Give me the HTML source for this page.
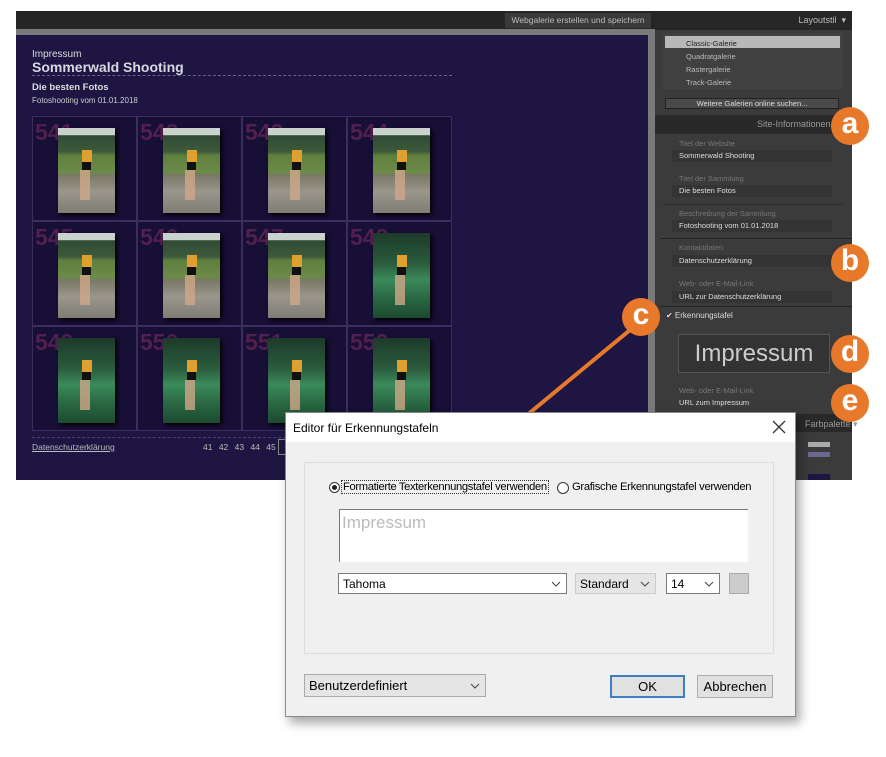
<!DOCTYPE html>
<html><head><meta charset="utf-8"><style>
*{margin:0;padding:0;box-sizing:border-box}
body{width:886px;height:757px;background:#fff;position:relative;overflow:hidden;font-family:"Liberation Sans",sans-serif}
.a{position:absolute;white-space:nowrap}
.cell{position:absolute;width:105px;height:105px;border:1px solid #3b2e5e;background:#170f36;overflow:hidden}
.num{position:absolute;left:2px;top:2px;font:bold 23px "Liberation Sans",sans-serif;color:#52204e}
.th{position:absolute;left:25px;top:11px;width:57px;height:85px;box-shadow:2px 2px 4px #000}
.m{background:linear-gradient(#c9d2cc 0,#c9d2cc 8%,#2f4a34 9%,#3d5a3c 28%,#5f7f3e 32%,#6c8a48 52%,#7a7868 56%,#9a968c 75%,#7f7c74 100%)}
.f{background:linear-gradient(#1c3a2a 0,#2a5a3c 35%,#3a8a5a 55%,#2b6a44 75%,#1c4a30 100%)}
.fig{position:absolute;left:24px;top:22px;width:10px;height:12px;background:#e0a030}
.fig2{position:absolute;left:24px;top:34px;width:9px;height:8px;background:#111}
.leg{position:absolute;left:22px;top:42px;width:10px;height:30px;background:#d0a888;opacity:.8}
.lab{position:absolute;color:#777;font-size:7.5px;line-height:9px}
.val{position:absolute;color:#ddd;font-size:7.5px;line-height:10px}
.fld{position:absolute;left:672px;width:160px;height:12px;background:#343434}
.circ{position:absolute;width:38px;height:38px;border-radius:50%;background:#e8792a;color:#fff;font:bold 30px "Liberation Sans",sans-serif;text-align:center;line-height:34px}
.dd{position:absolute;height:21px;border:1px solid #7a7a7a;background:#fff;font-size:12px;color:#000;padding:3px 4px}
.dd svg{position:absolute;right:5px;top:7px}
.btn{position:absolute;height:23px;border:1px solid #adadad;background:#e1e1e1;font-size:13px;text-align:center;line-height:19px;color:#000}
</style></head><body>
<div class="a" style="left:16px;top:11px;width:836px;height:469px;background:#252525"></div>
<div class="a" style="left:505px;top:13px;width:146px;height:15px;background:#3a3a3a;color:#bbb;font-size:8.5px;text-align:center;line-height:15px">Webgalerie erstellen und speichern</div>
<div class="a" style="left:16px;top:29px;width:639px;height:451px;background:#7a7a7a"></div>
<div class="a" style="left:16px;top:35px;width:632px;height:445px;background:#1e1543"></div>
<div class="a" style="left:32px;top:49px;color:#ddd;font-size:10px">Impressum</div>
<div class="a" style="left:32px;top:59px;color:#d8d8e0;font-size:14px;font-weight:bold">Sommerwald Shooting</div>
<div class="a" style="left:32px;top:75px;width:420px;border-top:1px dashed #6a6090"></div>
<div class="a" style="left:32px;top:82px;color:#ddd;font-size:9.5px;font-weight:bold">Die besten Fotos</div>
<div class="a" style="left:32px;top:96px;color:#ccc;font-size:8px">Fotoshooting vom 01.01.2018</div>

<div class="cell" style="left:32px;top:116px"><div class="num">541</div><div class="th m"><div class="fig"></div><div class="fig2"></div><div class="leg"></div></div></div>
<div class="cell" style="left:137px;top:116px"><div class="num">542</div><div class="th m"><div class="fig"></div><div class="fig2"></div><div class="leg"></div></div></div>
<div class="cell" style="left:242px;top:116px"><div class="num">543</div><div class="th m"><div class="fig"></div><div class="fig2"></div><div class="leg"></div></div></div>
<div class="cell" style="left:347px;top:116px"><div class="num">544</div><div class="th m"><div class="fig"></div><div class="fig2"></div><div class="leg"></div></div></div>
<div class="cell" style="left:32px;top:221px"><div class="num">545</div><div class="th m"><div class="fig"></div><div class="fig2"></div><div class="leg"></div></div></div>
<div class="cell" style="left:137px;top:221px"><div class="num">546</div><div class="th m"><div class="fig"></div><div class="fig2"></div><div class="leg"></div></div></div>
<div class="cell" style="left:242px;top:221px"><div class="num">547</div><div class="th m"><div class="fig"></div><div class="fig2"></div><div class="leg"></div></div></div>
<div class="cell" style="left:347px;top:221px"><div class="num">548</div><div class="th f"><div class="fig"></div><div class="fig2"></div><div class="leg"></div></div></div>
<div class="cell" style="left:32px;top:326px"><div class="num">549</div><div class="th f"><div class="fig"></div><div class="fig2"></div><div class="leg"></div></div></div>
<div class="cell" style="left:137px;top:326px"><div class="num">550</div><div class="th f"><div class="fig"></div><div class="fig2"></div><div class="leg"></div></div></div>
<div class="cell" style="left:242px;top:326px"><div class="num">551</div><div class="th f"><div class="fig"></div><div class="fig2"></div><div class="leg"></div></div></div>
<div class="cell" style="left:347px;top:326px"><div class="num">552</div><div class="th f"><div class="fig"></div><div class="fig2"></div><div class="leg"></div></div></div>

<div class="a" style="left:32px;top:437px;width:420px;border-top:1px dashed #4a4070"></div>
<div class="a" style="left:32px;top:442px;color:#bbb;font-size:8.5px;text-decoration:underline">Datenschutzerklärung</div>
<div class="a" style="left:203px;top:442px;color:#bbb;font-size:8.5px;word-spacing:4px">41 42 43 44 45</div>
<div class="a" style="left:278px;top:439px;width:10px;height:16px;border:1px solid #888"></div>

<div class="a" style="left:655px;top:11px;width:197px;height:469px;background:#3b3b3b"></div>
<div class="a" style="left:655px;top:11px;width:197px;height:19px;background:#262626;color:#bbb;font-size:9px;text-align:right;padding:4px 6px 0 0">Layoutstil &nbsp;▾</div>
<div class="a" style="left:663px;top:33px;width:180px;height:56px;background:#404040"></div>
<div class="a" style="left:665px;top:36px;width:175px;height:12px;background:#b8b8b8"></div>
<div class="a" style="left:686px;top:37px;font-size:7.5px;color:#222;line-height:13px">Classic-Galerie</div>
<div class="a" style="left:686px;top:50px;font-size:7.5px;color:#bbb;line-height:13px">Quadratgalerie<br>Rastergalerie<br>Track-Galerie</div>
<div class="a" style="left:665px;top:98px;width:174px;height:11px;background:#4a4a4a;border:1px solid #222;color:#ddd;font-size:7.5px;text-align:center;line-height:9px">Weitere Galerien online suchen...</div>
<div class="a" style="left:655px;top:115px;width:197px;height:19px;background:#292929;color:#999;font-size:9px;padding:4px 0 0 102px">Site-Informationen</div>
<div class="lab" style="left:679px;top:139px">Titel der Website</div>
<div class="fld" style="top:150px"></div><div class="val" style="left:679px;top:151px">Sommerwald Shooting</div>
<div class="lab" style="left:679px;top:174px">Titel der Sammlung</div>
<div class="fld" style="top:185px"></div><div class="val" style="left:679px;top:186px">Die besten Fotos</div>
<div class="a" style="left:663px;top:204px;width:180px;border-top:1px solid #2a2a2a"></div>
<div class="lab" style="left:679px;top:209px">Beschreibung der Sammlung</div>
<div class="fld" style="top:220px"></div><div class="val" style="left:679px;top:221px">Fotoshooting vom 01.01.2018</div>
<div class="a" style="left:660px;top:238px;width:192px;border-top:1px solid #222"></div>
<div class="lab" style="left:679px;top:243px">Kontaktdaten</div>
<div class="fld" style="top:255px"></div><div class="val" style="left:679px;top:256px">Datenschutzerklärung</div>
<div class="lab" style="left:679px;top:279px">Web- oder E-Mail-Link</div>
<div class="fld" style="top:291px"></div><div class="val" style="left:679px;top:292px">URL zur Datenschutzerklärung</div>
<div class="a" style="left:660px;top:306px;width:192px;border-top:1px solid #222"></div>
<div class="a" style="left:666px;top:311px;font-size:8px;color:#ddd">✔ Erkennungstafel</div>
<div class="a" style="left:678px;top:334px;width:152px;height:39px;background:#333;border:1px solid #555;color:#ccc;font-size:24px;text-align:center;line-height:37px">Impressum</div>
<div class="lab" style="left:679px;top:386px">Web- oder E-Mail-Link</div>
<div class="val" style="left:679px;top:398px">URL zum Impressum</div>
<div class="a" style="left:655px;top:414px;width:197px;height:18px;background:#292929;color:#999;font-size:9px;padding:5px 0 0 150px">Farbpalette ▾</div>
<div class="a" style="left:808px;top:442px;width:22px;height:5px;background:#aaa"></div>
<div class="a" style="left:808px;top:452px;width:22px;height:5px;background:#6a6a90"></div>
<div class="a" style="left:808px;top:474px;width:22px;height:6px;background:#1e1543"></div>

<svg class="a" style="left:0;top:0" width="886" height="757"><line x1="636" y1="325" x2="515" y2="425" stroke="#e8792a" stroke-width="4"/><polygon points="503,436 508,413 526,430" fill="#e8792a"/></svg>

<div class="a" style="left:285px;top:412px;width:511px;height:305px;background:#f0f0f0;border:1px solid #888;box-shadow:4px 6px 10px rgba(0,0,0,.35)"></div>
<div class="a" style="left:286px;top:413px;width:509px;height:29px;background:#fff;font-size:12px;color:#000;padding:8px 0 0 7px">Editor für Erkennungstafeln</div>
<svg class="a" style="left:772px;top:420px" width="14" height="14"><path d="M1 1L13 13M13 1L1 13" stroke="#333" stroke-width="1.3"/></svg>
<div class="a" style="left:304px;top:462px;width:470px;height:192px;border:1px solid #dcdcdc"></div>
<div class="a" style="left:329px;top:482px;width:11px;height:11px;border:1px solid #333;border-radius:50%;background:#fff"></div>
<div class="a" style="left:332px;top:485px;width:5px;height:5px;border-radius:50%;background:#222"></div>
<div class="a" style="left:341px;top:480px;font-size:11.2px;color:#000;border:1px dotted #333;padding:0 1px;letter-spacing:-.35px">Formatierte Texterkennungstafel verwenden</div>
<div class="a" style="left:557px;top:482px;width:12px;height:12px;border:1px solid #333;border-radius:50%;background:#fff"></div>
<div class="a" style="left:572px;top:481px;font-size:11.2px;color:#000;letter-spacing:-.3px">Grafische Erkennungstafel verwenden</div>
<div class="a" style="left:339px;top:509px;width:409px;height:53px;background:#fff;border-top:1px solid #777;border-left:1px solid #777"></div>
<div class="a" style="left:342px;top:513px;font-size:17px;color:#bbb">Impressum</div>
<div class="dd" style="left:338px;top:573px;width:229px">Tahoma<svg width="10" height="6"><path d="M1 1L5 5L9 1" stroke="#444" fill="none"/></svg></div>
<div class="dd" style="left:575px;top:573px;width:81px;background:#e5e5e5;border-color:#ccc">Standard<svg width="10" height="6"><path d="M1 1L5 5L9 1" stroke="#444" fill="none"/></svg></div>
<div class="dd" style="left:666px;top:573px;width:54px">14<svg width="10" height="6"><path d="M1 1L5 5L9 1" stroke="#444" fill="none"/></svg></div>
<div class="a" style="left:729px;top:573px;width:20px;height:21px;background:#ccc;border:1px solid #aaa"></div>
<div class="dd" style="left:304px;top:674px;width:182px;height:23px;background:#e5e5e5;border-color:#aaa;font-size:13px">Benutzerdefiniert<svg width="10" height="6" style="top:8px"><path d="M1 1L5 5L9 1" stroke="#444" fill="none"/></svg></div>
<div class="btn" style="left:610px;top:675px;width:75px;border:2px solid #3c7fc4">OK</div>
<div class="btn" style="left:697px;top:675px;width:76px;line-height:21px">Abbrechen</div>

<div class="circ" style="left:831px;top:107px">a</div>
<div class="circ" style="left:831px;top:244px">b</div>
<div class="circ" style="left:622px;top:298px">c</div>
<div class="circ" style="left:831px;top:335px">d</div>
<div class="circ" style="left:831px;top:384px">e</div>
</body></html>
